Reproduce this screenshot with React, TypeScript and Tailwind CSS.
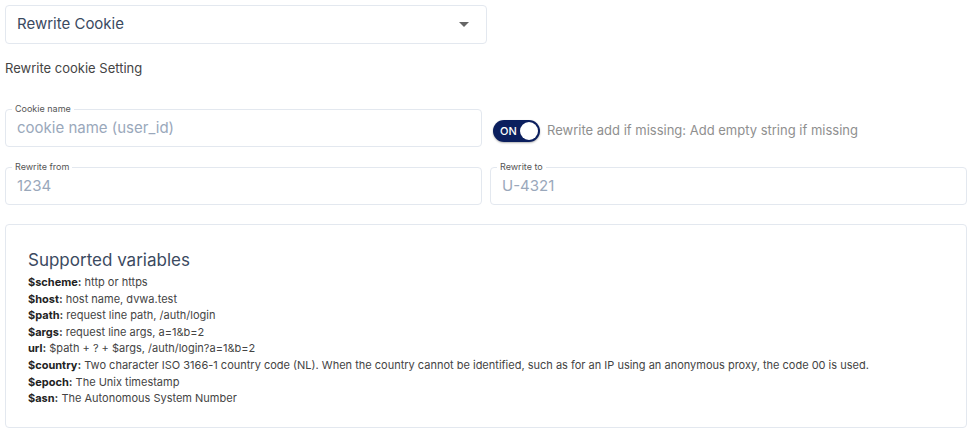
const font = { fontFamily: "Inter, 'Noto Sans', sans-serif" };

interface FieldProps {
  label: string;
  placeholder: string;
}

function Field({ label, placeholder }: FieldProps) {
  return (
    <div className="relative h-[38px] rounded-[4px] border border-[#e3e8ef] flex items-center px-[11px]">
      <span className="absolute left-[6px] top-[-7px] bg-white px-[3px] text-[9px] leading-[12px] text-[#555]">
        {label}
      </span>
      <span className="text-[15px] text-[#9aa8bb]">{placeholder}</span>
    </div>
  );
}

const vars = [
  { k: "$scheme:", v: "http or https" },
  { k: "$host:", v: "host name, dvwa.test" },
  { k: "$path:", v: "request line path, /auth/login" },
  { k: "$args:", v: "request line args, a=1&b=2" },
  { k: "url:", v: "$path + ? + $args, /auth/login?a=1&b=2" },
  {
    k: "$country:",
    v: "Two character ISO 3166-1 country code (NL). When the country cannot be identified, such as for an IP using an anonymous proxy, the code 00 is used.",
  },
  { k: "$epoch:", v: "The Unix timestamp" },
  { k: "$asn:", v: "The Autonomous System Number" },
];

export default function App() {
  return (
    <div className="w-[975px] h-[434px] bg-white p-[5px] pr-[8px]" style={font}>
      <div className="w-[482px] h-[39px] rounded-[4px] border border-[#e3e8ef] flex items-center justify-between pl-[11px] pr-[17px]">
        <span className="text-[15px] text-[#3b4a5f]">Rewrite Cookie</span>
        <span className="w-0 h-0 border-l-[5px] border-r-[5px] border-t-[5px] border-l-transparent border-r-transparent border-t-[#666]" />
      </div>

      <p className="mt-[16px] text-[13px] text-[#444] leading-[16px]">Rewrite cookie Setting</p>

      <div className="mt-[33px] grid grid-cols-2 gap-x-[8px] gap-y-[20px]">
        <Field label="Cookie name" placeholder="cookie name (user_id)" />
        <div className="flex items-center gap-[7px] pl-[3px] pt-[6px]">
          <div className="w-[47px] h-[22px] rounded-full bg-[#0b1f5e] flex items-center justify-between pl-[7px] pr-[2px] shadow-[0_1px_2px_rgba(0,0,0,0.3)]">
            <span className="text-[11px] font-medium text-white">ON</span>
            <span className="w-[18px] h-[18px] rounded-full bg-white" />
          </div>
          <span className="text-[13px] text-[#8f8f8f]">
            Rewrite add if missing: Add empty string if missing
          </span>
        </div>
        <Field label="Rewrite from" placeholder="1234" />
        <Field label="Rewrite to" placeholder="U-4321" />
      </div>

      <div className="mt-[19px] h-[204px] rounded-[4px] border border-[#e3e8ef] px-[22px] pt-[24px]">
        <h2 className="text-[17px] text-[#3b4a5f] leading-[22px]">Supported variables</h2>
        <ul className="mt-[3px] text-[11px] leading-[16.6px] text-[#444]">
          {vars.map((item) => (
            <li key={item.k}>
              <b className="font-bold text-[#222]">{item.k}</b> {item.v}
            </li>
          ))}
        </ul>
      </div>
    </div>
  );
}
